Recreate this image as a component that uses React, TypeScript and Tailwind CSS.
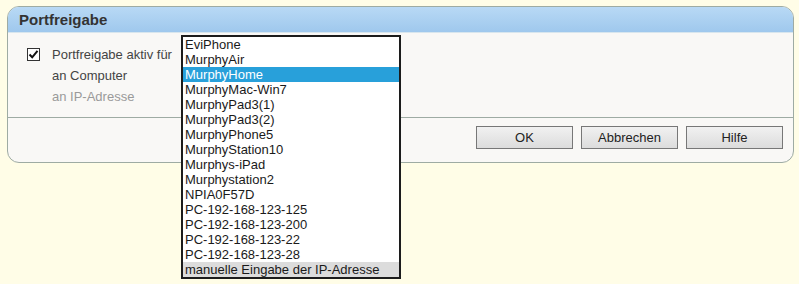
import React from "react";

const items = [
  "EviPhone",
  "MurphyAir",
  "MurphyHome",
  "MurphyMac-Win7",
  "MurphyPad3(1)",
  "MurphyPad3(2)",
  "MurphyPhone5",
  "MurphyStation10",
  "Murphys-iPad",
  "Murphystation2",
  "NPIA0F57D",
  "PC-192-168-123-125",
  "PC-192-168-123-200",
  "PC-192-168-123-22",
  "PC-192-168-123-28",
  "manuelle Eingabe der IP-Adresse",
];

export default function App() {
  return (
    <div
      className="relative w-[799px] h-[284px] bg-[#fffde7] pt-[6px] pl-[7px] overflow-hidden"
      style={{ fontFamily: '"Liberation Sans", Arial, sans-serif' }}
    >
      <div className="w-[787px] h-[157px] flex flex-col border border-[#9eaba3] rounded-[12px] bg-[#f9f8f6] overflow-hidden">
        <div className="h-[26px] shrink-0 flex items-center pl-[11px] bg-gradient-to-b from-[#b8d9f5] to-[#9fc8ed] border-b border-[#d8e6ee]">
          <span className="text-[15px] font-bold text-[#333] leading-none">Portfreigabe</span>
        </div>
        <div className="h-[85px] shrink-0 border-b border-[#9eaba3] pt-[11px] pl-[19px] text-[13px] text-[#444]">
          <div className="flex items-center h-[21px]">
            <div className="w-[13px] h-[13px] border border-[#333] bg-white flex items-center justify-center">
              <svg width="11" height="11" viewBox="0 0 11 11">
                <path d="M1.5 5.5 L4.2 8.3 L9.5 1.8" fill="none" stroke="#111" strokeWidth="2" />
              </svg>
            </div>
            <span className="ml-[12px]">Portfreigabe aktiv für</span>
          </div>
          <div className="h-[21px] flex items-center pl-[25px]">an Computer</div>
          <div className="h-[22px] flex items-center pl-[25px] text-[#9a9a9a]">an IP-Adresse</div>
        </div>
        <div className="flex-1 flex justify-end items-start pt-[8px] pr-[10px] gap-[8px]">
          {["OK", "Abbrechen", "Hilfe"].map((b) => (
            <button
              key={b}
              className="w-[97px] h-[23px] border border-[#777] bg-gradient-to-b from-[#f1f1f1] to-[#dcdcdc] text-[13px] text-[#222] flex items-center justify-center leading-none"
            >
              {b}
            </button>
          ))}
        </div>
      </div>

      <div className="absolute left-[181px] top-[35px] w-[220px] border-2 border-[#1c1c1c] bg-white text-[13px] leading-[15px] text-[#1a1a1a]">
        {items.map((it, i) => (
          <div
            key={it}
            className={
              "h-[15px] pl-[2px] whitespace-nowrap " +
              (i === 2
                ? "bg-[#28a0da] text-white"
                : i === items.length - 1
                ? "bg-[#dcdcdc]"
                : "")
            }
          >
            {it}
          </div>
        ))}
      </div>
    </div>
  );
}
